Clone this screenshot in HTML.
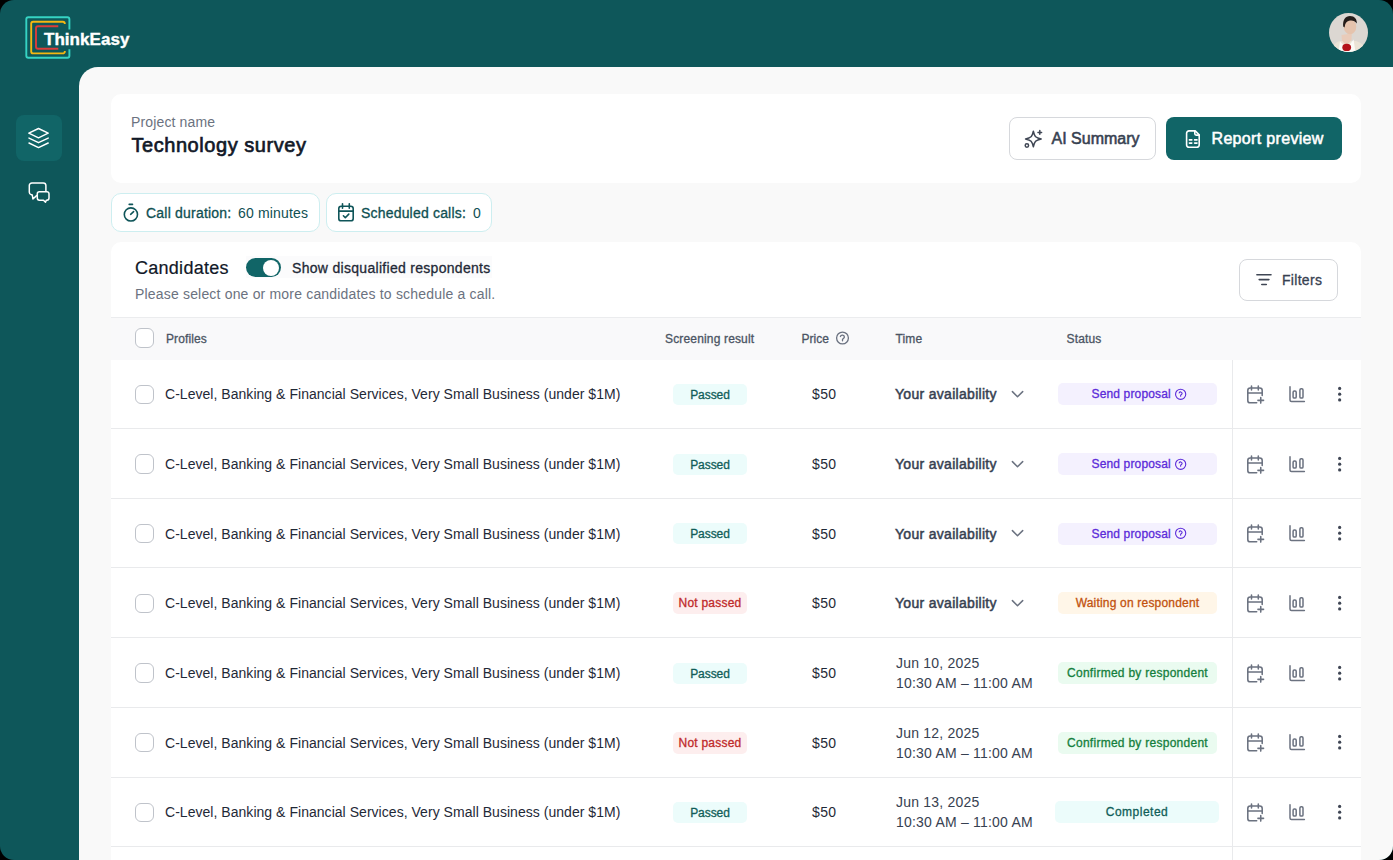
<!DOCTYPE html>
<html><head><meta charset="utf-8">
<style>
*{box-sizing:border-box;margin:0;padding:0}
html,body{width:1393px;height:860px;background:#000;overflow:hidden}
body{font-family:"Liberation Sans",sans-serif;color:#111827}
.app{position:absolute;left:0;top:0;width:1393px;height:860px;border-radius:14px;overflow:hidden;background:#0e575a}
.abs{position:absolute}
.main{position:absolute;left:79px;top:66.5px;width:1314px;height:794px;background:#f9f9f9;border-top-left-radius:19px}
.card{position:absolute;background:#fff;border-radius:10px}
.t{position:absolute;white-space:nowrap;line-height:16px}
.row{position:absolute;left:111px;width:1250px;border-bottom:1px solid #e9eaec;background:#fff}
.cb{position:absolute;left:134.5px;width:19.5px;height:19.5px;border:1.5px solid #bfc3ca;border-radius:6px;background:#fff}
.prof{left:165px;font-size:14px;color:#1f2937;letter-spacing:0.036px}
.badge{position:absolute;height:22px;line-height:23px;border-radius:5px;font-size:12px;text-align:center;white-space:nowrap;-webkit-text-stroke:0.3px currentColor}
.pass{background:#ecfcfb;color:#115e59;height:21px;line-height:22px;letter-spacing:-0.05px}
.fail{background:#fdeeee;color:#c02a2a;letter-spacing:0.23px}
.send{background:#f4f1fe;color:#5b2bd9;letter-spacing:0.15px}
.wait{background:#fff6e8;color:#c2520f;letter-spacing:0.19px}
.conf{background:#eafbf0;color:#15803d;letter-spacing:0.27px}
.done{background:#ecfcfb;color:#115e59;letter-spacing:0.5px}
.price{left:812px;font-size:14px;color:#1f2937;letter-spacing:0.4px}
.avail{left:895px;font-size:14px;color:#374151;letter-spacing:0.3px;-webkit-text-stroke:0.5px currentColor}
.date{left:896px;font-size:14px;color:#374151;line-height:20px;letter-spacing:0.21px}
.hdr{font-size:12px;color:#4b5563}
.m{-webkit-text-stroke:0.3px currentColor}
.sb{-webkit-text-stroke:0.55px currentColor}
</style></head>
<body><div class="app">
<!-- logo -->
<svg class="abs" style="left:0;top:0" width="140" height="66" viewBox="0 0 140 66">
 <path d="M69.4 29.4 V19.2 a2 2 0 0 0 -2 -2 H28.3 a2 2 0 0 0 -2 2 V55.7 a2 2 0 0 0 2 2 H67.4 a2 2 0 0 0 2 -2 V49.2" fill="none" stroke="#36d3c3" stroke-width="1.9"/>
 <path d="M64.8 24 V23.8 a2 2 0 0 0 -2 -2 H33.2 a2 2 0 0 0 -2 2 V51.4 a2 2 0 0 0 2 2 H62.8 a2 2 0 0 0 2 -2 V51" fill="none" stroke="#f4b711" stroke-width="1.9"/>
 <path d="M58.3 26.3 H38 a2 2 0 0 0 -2 2 V46.8 a2 2 0 0 0 2 2 H58.3" fill="none" stroke="#dc3d3a" stroke-width="1.9"/>
</svg>
<div class="t" style="left:44px;top:30.5px;font-size:17px;line-height:17px;font-weight:bold;color:#fff;letter-spacing:0.04px;-webkit-text-stroke:0.4px #fff">ThinkEasy</div>

<!-- avatar -->
<svg class="abs" style="left:1329px;top:13px" width="39" height="39" viewBox="0 0 39 39">
 <defs><clipPath id="av"><circle cx="19.5" cy="19.5" r="19.5"/></clipPath></defs>
 <g clip-path="url(#av)">
  <rect width="39" height="39" fill="#dcd7d2"/>
  <path d="M0 39 C3 32 7 29.5 11 28 L27 28 C32 29.5 36 33 39 39Z" fill="#ebe3d6"/>
  <path d="M12.5 22 L13 27.5 L17.5 33 L22.5 27 L22.8 20.5Z" fill="#e9cbb9"/>
  <path d="M9.5 39 L11 28.5 L16 33.5 L18 36 L22 30 L24.5 26.5 L26.5 39Z" fill="#fbfaf7"/>
  <ellipse cx="17.7" cy="34.4" rx="4.4" ry="3.6" fill="#b4121a"/>
  <ellipse cx="21" cy="13.8" rx="6.3" ry="7.4" fill="#e5c3ad"/>
  <path d="M14.2 13.5 C13.5 7 16.5 3 21 3 C25.5 3 28.3 6.5 27.8 10.5 C26 7.8 23 7 20 7.8 C17.5 8.5 16 10.5 15.6 14.5Z" fill="#251d1a"/>
 </g>
</svg>

<!-- sidebar -->
<div class="abs" style="left:15.5px;top:114.5px;width:46.5px;height:46.5px;border-radius:8px;background:#116567"></div>
<svg class="abs" style="left:24px;top:124px" width="30" height="30" viewBox="0 0 30 30" fill="none" stroke="#fff" stroke-width="1.45" stroke-linejoin="round" stroke-linecap="round">
 <path d="M14.5 4.5 L24.2 9.2 L14.5 13.8 L4.8 9.2Z"/>
 <path d="M5 14.1 L14.5 18.7 L24.2 14.1"/>
 <path d="M5 19 L14.5 23.6 L24.2 19"/>
</svg>
<svg class="abs" style="left:24px;top:178px" width="30" height="30" viewBox="0 0 30 30" fill="none" stroke="#fff" stroke-width="1.5" stroke-linejoin="round" stroke-linecap="round">
 <path d="M21.9 13.2 V7.6 a2.6 2.6 0 0 0 -2.6 -2.6 H7.9 a2.6 2.6 0 0 0 -2.6 2.6 V14.2 a2.6 2.6 0 0 0 2 2.5 L8.3 17 L8.9 21 L12.6 17.6"/>
 <path d="M15.4 13.7 H22.9 a2.1 2.1 0 0 1 2.1 2.1 V20.1 a2.1 2.1 0 0 1 -2.1 2.1 H22.3 L21.5 24.2 L19.5 22.2 H15.4 a2.1 2.1 0 0 1 -2.1 -2.1 V15.8 a2.1 2.1 0 0 1 2.1 -2.1Z"/>
</svg>

<!-- main -->
<div class="main"></div>

<!-- project card -->
<div class="card" style="left:111px;top:94px;width:1250px;height:89px"></div>
<div class="t" style="left:131px;top:114px;font-size:14px;color:#6b7280;letter-spacing:0.14px">Project name</div>
<div class="t sb" style="left:131.5px;top:135px;font-size:20px;line-height:20px;color:#111827;letter-spacing:0.55px;-webkit-text-stroke:0.65px #111827">Technology survey</div>

<div class="abs" style="left:1009px;top:117px;width:147px;height:43px;border:1px solid #d6d8dc;border-radius:8px;background:#fff"></div>
<svg class="abs" style="left:1018px;top:124px" width="30" height="30" viewBox="0 0 30 30" fill="none" stroke="#3f4654" stroke-width="1.5" stroke-linejoin="round" stroke-linecap="round">
 <path transform="translate(15.35 15) scale(1.155) translate(-9 -12)" stroke-width="1.3" d="M9.813 15.904 L9 18.75 l-.813-2.846 a4.5 4.5 0 0 0-3.09-3.09 L2.25 12 l2.846-.813 a4.5 4.5 0 0 0 3.09-3.09 L9 5.25 l.813 2.846 a4.5 4.5 0 0 0 3.09 3.09 L15.75 12 l-2.846.813 a4.5 4.5 0 0 0-3.09 3.09Z"/>
 <path d="M21.8 6.6v3.6M20 8.4h3.6"/>
 <circle cx="8.9" cy="21.45" r="1.7"/>
</svg>
<div class="t sb" style="left:1051.5px;top:131px;font-size:16px;line-height:16px;color:#374151;letter-spacing:0px">AI Summary</div>

<div class="abs" style="left:1166px;top:117px;width:176px;height:43px;border-radius:8px;background:#116567"></div>
<svg class="abs" style="left:1178px;top:124px" width="30" height="30" viewBox="0 0 30 30" fill="none" stroke="#fff" stroke-width="1.6" stroke-linejoin="round" stroke-linecap="round">
 <path d="M17.2 6.9 H11 a2.4 2.4 0 0 0 -2.4 2.4 V20.9 a2.4 2.4 0 0 0 2.4 2.4 H18.8 a2.4 2.4 0 0 0 2.4 -2.4 V10.9Z"/>
 <path d="M16.8 7.2 V9.8 a1.3 1.3 0 0 0 1.3 1.3 H21"/>
 <path d="M11.4 15.9h2.4M16.6 15.9h2.4M11.4 19.1h2.4M16.6 19.1h2.4"/>
</svg>
<div class="t sb" style="left:1211.5px;top:131px;font-size:16px;line-height:16px;color:#fff;letter-spacing:0.33px">Report preview</div>

<!-- chips -->
<div class="abs" style="left:111px;top:193px;width:208.5px;height:38.5px;border:1px solid #cdeef0;border-radius:10px;background:#fff"></div>
<svg class="abs" style="left:116px;top:197px" width="30" height="30" viewBox="0 0 30 30" fill="none" stroke="#0f5559" stroke-width="1.6" stroke-linecap="round" stroke-linejoin="round">
 <circle cx="14.9" cy="17.45" r="6.6"/>
 <path d="M13.2 7.4h3.3M14.65 17.3l2.95-2.65"/>
</svg>
<div class="t m" style="left:146px;top:205px;font-size:14px;color:#0f4f52;letter-spacing:0.21px">Call duration:</div>
<div class="t" style="left:238px;top:205px;font-size:14px;color:#0f4f52;letter-spacing:0.16px">60 minutes</div>

<div class="abs" style="left:326px;top:193px;width:165.5px;height:38.5px;border:1px solid #cdeef0;border-radius:10px;background:#fff"></div>
<svg class="abs" style="left:331px;top:197px" width="30" height="30" viewBox="0 0 30 30" fill="none" stroke="#0f5559" stroke-width="1.6" stroke-linecap="round" stroke-linejoin="round">
 <rect x="7.8" y="9.2" width="14.4" height="14.6" rx="2.4"/>
 <path d="M7.8 14.1H22.2M11.5 6.7v4.6M18.3 6.7v4.6M12.4 18.8l1.9 1.95l3.5-3.65"/>
</svg>
<div class="t m" style="left:361px;top:205px;font-size:14px;color:#0f4f52;letter-spacing:0.19px">Scheduled calls:</div>
<div class="t" style="left:473px;top:205px;font-size:14px;color:#0f4f52">0</div>

<!-- table card -->
<div class="card" style="left:111px;top:241.5px;width:1250px;height:640px"></div>
<div class="t" style="left:135px;top:258.5px;font-size:18px;line-height:18px;color:#111827;letter-spacing:0.27px;-webkit-text-stroke:0.2px #111827">Candidates</div>
<div class="abs" style="left:246px;top:256px;width:246px;height:22px;background:#fbfbfc"></div>
<div class="abs" style="left:246px;top:258px;width:35px;height:19px;border-radius:10px;background:#116567"></div>
<div class="abs" style="left:263px;top:259.6px;width:16px;height:16px;border-radius:50%;background:#fff"></div>
<div class="t m" style="left:292px;top:260px;font-size:14px;color:#1f2937;letter-spacing:0.3px">Show disqualified respondents</div>
<div class="t" style="left:135px;top:286px;font-size:14px;color:#6b7280;letter-spacing:0.18px">Please select one or more candidates to schedule a call.</div>

<div class="abs" style="left:1239px;top:258.5px;width:98.5px;height:42px;border:1px solid #d6d8dc;border-radius:8px;background:#fff"></div>
<svg class="abs" style="left:1250px;top:265px" width="30" height="30" viewBox="0 0 30 30" fill="none" stroke="#3f4654" stroke-width="1.6" stroke-linecap="round">
 <path d="M6.9 9.8H21M9.2 14.6h9.7M11.8 19.5h4.5"/>
</svg>
<div class="t m" style="left:1282px;top:272px;font-size:14px;color:#374151;letter-spacing:0.3px">Filters</div>

<!-- table header -->
<div class="abs" style="left:111px;top:317px;width:1250px;height:42.5px;background:#f9f9fa;border-top:1px solid #ebecee"></div>
<div class="cb" style="top:328.3px"></div>
<div class="t hdr m" style="left:166px;top:331px;letter-spacing:0.11px">Profiles</div>
<div class="t hdr m" style="left:665px;top:331px;letter-spacing:0.16px">Screening result</div>
<div class="t hdr m" style="left:801.5px;top:331px">Price</div>
<svg class="abs" style="left:827px;top:323px" width="30" height="30" viewBox="0 0 30 30" fill="none" stroke="#6b7280" stroke-width="1.3" stroke-linecap="round" stroke-linejoin="round">
 <circle cx="15.5" cy="15" r="5.9"/>
 <path d="M13.4 13.5a2.05 2.05 0 0 1 4 .6c0 1.2-1.9 1.5-1.9 2.5v1.2"/>
</svg>
<div class="t hdr m" style="left:895.5px;top:331px;letter-spacing:0.15px">Time</div>
<div class="t hdr m" style="left:1066.5px;top:331px;letter-spacing:0.15px">Status</div>

<div class="row" style="top:359.50px;height:69.67px"></div>
<div class="cb" style="top:384.63px"></div>
<div class="t prof" style="top:386.33px">C-Level, Banking &amp; Financial Services, Very Small Business (under $1M)</div>
<div class="badge pass" style="left:673px;width:74px;top:383.83px">Passed</div>
<div class="t price" style="top:386.33px">$50</div>
<div class="t avail" style="top:386.33px">Your availability</div>
<svg class="abs" style="left:1003px;top:379.03px" width="30" height="30" viewBox="0 0 30 30" fill="none" stroke="#6b7280" stroke-width="1.5" stroke-linecap="round" stroke-linejoin="round"><path d="M9.4 12.6L14.5 17.7L19.7 12.6"/></svg>
<div class="badge send" style="left:1058px;width:159px;top:383.33px;text-align:left;padding-left:33.5px">Send proposal</div>
<svg class="abs" style="left:1166px;top:379.03px" width="30" height="30" viewBox="0 0 30 30" fill="none" stroke="#5b2bd9" stroke-width="1.1" stroke-linecap="round" stroke-linejoin="round"><circle cx="14.65" cy="15.3" r="5.1"/><path d="M13.2 13.9a1.5 1.5 0 0 1 2.9 .5c0 1-1.45 1.1-1.45 2v0.9"/></svg>
<svg class="abs" style="left:1240px;top:379.03px" width="30" height="30" viewBox="0 0 30 30" fill="none" stroke="#6b7280" stroke-width="1.55" stroke-linecap="round" stroke-linejoin="round"><path d="M22.2 16.4V11.4a2.4 2.4 0 0 0-2.4-2.4H10.2a2.4 2.4 0 0 0-2.4 2.4V21.4a2.4 2.4 0 0 0 2.4 2.4H16.7"/><path d="M7.8 14H22.2"/><path d="M11.5 6.9v4.1M18.3 6.9v4.1"/><path d="M20.75 18.5v5.6M17.9 21.35h5.7"/></svg>
<svg class="abs" style="left:1282px;top:379.03px" width="30" height="30" viewBox="0 0 30 30" fill="none" stroke="#6b7280" stroke-width="1.5" stroke-linecap="round" stroke-linejoin="round"><path d="M8 7.7V20.9a1.5 1.5 0 0 0 1.5 1.5H22.4"/><rect x="11.1" y="12.1" width="3.1" height="7" rx="1.2"/><rect x="17.9" y="9.7" width="3.1" height="9.4" rx="1.2"/></svg>
<svg class="abs" style="left:1325px;top:379.03px" width="30" height="30" viewBox="0 0 30 30" fill="#3f4654"><circle cx="14.65" cy="9.4" r="1.6"/><circle cx="14.65" cy="15.2" r="1.6"/><circle cx="14.65" cy="20.9" r="1.6"/></svg>
<div class="row" style="top:429.17px;height:69.67px"></div>
<div class="cb" style="top:454.31px"></div>
<div class="t prof" style="top:456.00px">C-Level, Banking &amp; Financial Services, Very Small Business (under $1M)</div>
<div class="badge pass" style="left:673px;width:74px;top:453.50px">Passed</div>
<div class="t price" style="top:456.00px">$50</div>
<div class="t avail" style="top:456.00px">Your availability</div>
<svg class="abs" style="left:1003px;top:448.70px" width="30" height="30" viewBox="0 0 30 30" fill="none" stroke="#6b7280" stroke-width="1.5" stroke-linecap="round" stroke-linejoin="round"><path d="M9.4 12.6L14.5 17.7L19.7 12.6"/></svg>
<div class="badge send" style="left:1058px;width:159px;top:453.00px;text-align:left;padding-left:33.5px">Send proposal</div>
<svg class="abs" style="left:1166px;top:448.70px" width="30" height="30" viewBox="0 0 30 30" fill="none" stroke="#5b2bd9" stroke-width="1.1" stroke-linecap="round" stroke-linejoin="round"><circle cx="14.65" cy="15.3" r="5.1"/><path d="M13.2 13.9a1.5 1.5 0 0 1 2.9 .5c0 1-1.45 1.1-1.45 2v0.9"/></svg>
<svg class="abs" style="left:1240px;top:448.70px" width="30" height="30" viewBox="0 0 30 30" fill="none" stroke="#6b7280" stroke-width="1.55" stroke-linecap="round" stroke-linejoin="round"><path d="M22.2 16.4V11.4a2.4 2.4 0 0 0-2.4-2.4H10.2a2.4 2.4 0 0 0-2.4 2.4V21.4a2.4 2.4 0 0 0 2.4 2.4H16.7"/><path d="M7.8 14H22.2"/><path d="M11.5 6.9v4.1M18.3 6.9v4.1"/><path d="M20.75 18.5v5.6M17.9 21.35h5.7"/></svg>
<svg class="abs" style="left:1282px;top:448.70px" width="30" height="30" viewBox="0 0 30 30" fill="none" stroke="#6b7280" stroke-width="1.5" stroke-linecap="round" stroke-linejoin="round"><path d="M8 7.7V20.9a1.5 1.5 0 0 0 1.5 1.5H22.4"/><rect x="11.1" y="12.1" width="3.1" height="7" rx="1.2"/><rect x="17.9" y="9.7" width="3.1" height="9.4" rx="1.2"/></svg>
<svg class="abs" style="left:1325px;top:448.70px" width="30" height="30" viewBox="0 0 30 30" fill="#3f4654"><circle cx="14.65" cy="9.4" r="1.6"/><circle cx="14.65" cy="15.2" r="1.6"/><circle cx="14.65" cy="20.9" r="1.6"/></svg>
<div class="row" style="top:498.84px;height:69.67px"></div>
<div class="cb" style="top:523.98px"></div>
<div class="t prof" style="top:525.68px">C-Level, Banking &amp; Financial Services, Very Small Business (under $1M)</div>
<div class="badge pass" style="left:673px;width:74px;top:523.18px">Passed</div>
<div class="t price" style="top:525.68px">$50</div>
<div class="t avail" style="top:525.68px">Your availability</div>
<svg class="abs" style="left:1003px;top:518.38px" width="30" height="30" viewBox="0 0 30 30" fill="none" stroke="#6b7280" stroke-width="1.5" stroke-linecap="round" stroke-linejoin="round"><path d="M9.4 12.6L14.5 17.7L19.7 12.6"/></svg>
<div class="badge send" style="left:1058px;width:159px;top:522.68px;text-align:left;padding-left:33.5px">Send proposal</div>
<svg class="abs" style="left:1166px;top:518.38px" width="30" height="30" viewBox="0 0 30 30" fill="none" stroke="#5b2bd9" stroke-width="1.1" stroke-linecap="round" stroke-linejoin="round"><circle cx="14.65" cy="15.3" r="5.1"/><path d="M13.2 13.9a1.5 1.5 0 0 1 2.9 .5c0 1-1.45 1.1-1.45 2v0.9"/></svg>
<svg class="abs" style="left:1240px;top:518.38px" width="30" height="30" viewBox="0 0 30 30" fill="none" stroke="#6b7280" stroke-width="1.55" stroke-linecap="round" stroke-linejoin="round"><path d="M22.2 16.4V11.4a2.4 2.4 0 0 0-2.4-2.4H10.2a2.4 2.4 0 0 0-2.4 2.4V21.4a2.4 2.4 0 0 0 2.4 2.4H16.7"/><path d="M7.8 14H22.2"/><path d="M11.5 6.9v4.1M18.3 6.9v4.1"/><path d="M20.75 18.5v5.6M17.9 21.35h5.7"/></svg>
<svg class="abs" style="left:1282px;top:518.38px" width="30" height="30" viewBox="0 0 30 30" fill="none" stroke="#6b7280" stroke-width="1.5" stroke-linecap="round" stroke-linejoin="round"><path d="M8 7.7V20.9a1.5 1.5 0 0 0 1.5 1.5H22.4"/><rect x="11.1" y="12.1" width="3.1" height="7" rx="1.2"/><rect x="17.9" y="9.7" width="3.1" height="9.4" rx="1.2"/></svg>
<svg class="abs" style="left:1325px;top:518.38px" width="30" height="30" viewBox="0 0 30 30" fill="#3f4654"><circle cx="14.65" cy="9.4" r="1.6"/><circle cx="14.65" cy="15.2" r="1.6"/><circle cx="14.65" cy="20.9" r="1.6"/></svg>
<div class="row" style="top:568.51px;height:69.67px"></div>
<div class="cb" style="top:593.64px"></div>
<div class="t prof" style="top:595.35px">C-Level, Banking &amp; Financial Services, Very Small Business (under $1M)</div>
<div class="badge fail" style="left:673px;width:74px;top:592.35px">Not passed</div>
<div class="t price" style="top:595.35px">$50</div>
<div class="t avail" style="top:595.35px">Your availability</div>
<svg class="abs" style="left:1003px;top:588.05px" width="30" height="30" viewBox="0 0 30 30" fill="none" stroke="#6b7280" stroke-width="1.5" stroke-linecap="round" stroke-linejoin="round"><path d="M9.4 12.6L14.5 17.7L19.7 12.6"/></svg>
<div class="badge wait" style="left:1058px;width:159px;top:592.35px">Waiting on respondent</div>
<svg class="abs" style="left:1240px;top:588.05px" width="30" height="30" viewBox="0 0 30 30" fill="none" stroke="#6b7280" stroke-width="1.55" stroke-linecap="round" stroke-linejoin="round"><path d="M22.2 16.4V11.4a2.4 2.4 0 0 0-2.4-2.4H10.2a2.4 2.4 0 0 0-2.4 2.4V21.4a2.4 2.4 0 0 0 2.4 2.4H16.7"/><path d="M7.8 14H22.2"/><path d="M11.5 6.9v4.1M18.3 6.9v4.1"/><path d="M20.75 18.5v5.6M17.9 21.35h5.7"/></svg>
<svg class="abs" style="left:1282px;top:588.05px" width="30" height="30" viewBox="0 0 30 30" fill="none" stroke="#6b7280" stroke-width="1.5" stroke-linecap="round" stroke-linejoin="round"><path d="M8 7.7V20.9a1.5 1.5 0 0 0 1.5 1.5H22.4"/><rect x="11.1" y="12.1" width="3.1" height="7" rx="1.2"/><rect x="17.9" y="9.7" width="3.1" height="9.4" rx="1.2"/></svg>
<svg class="abs" style="left:1325px;top:588.05px" width="30" height="30" viewBox="0 0 30 30" fill="#3f4654"><circle cx="14.65" cy="9.4" r="1.6"/><circle cx="14.65" cy="15.2" r="1.6"/><circle cx="14.65" cy="20.9" r="1.6"/></svg>
<div class="row" style="top:638.18px;height:69.67px"></div>
<div class="cb" style="top:663.32px"></div>
<div class="t prof" style="top:665.02px">C-Level, Banking &amp; Financial Services, Very Small Business (under $1M)</div>
<div class="badge pass" style="left:673px;width:74px;top:662.52px">Passed</div>
<div class="t price" style="top:665.02px">$50</div>
<div class="t date" style="top:653.02px">Jun 10, 2025<br>10:30 AM – 11:00 AM</div>
<div class="badge conf" style="left:1058px;width:159px;top:662.02px">Confirmed by respondent</div>
<svg class="abs" style="left:1240px;top:657.72px" width="30" height="30" viewBox="0 0 30 30" fill="none" stroke="#6b7280" stroke-width="1.55" stroke-linecap="round" stroke-linejoin="round"><path d="M22.2 16.4V11.4a2.4 2.4 0 0 0-2.4-2.4H10.2a2.4 2.4 0 0 0-2.4 2.4V21.4a2.4 2.4 0 0 0 2.4 2.4H16.7"/><path d="M7.8 14H22.2"/><path d="M11.5 6.9v4.1M18.3 6.9v4.1"/><path d="M20.75 18.5v5.6M17.9 21.35h5.7"/></svg>
<svg class="abs" style="left:1282px;top:657.72px" width="30" height="30" viewBox="0 0 30 30" fill="none" stroke="#6b7280" stroke-width="1.5" stroke-linecap="round" stroke-linejoin="round"><path d="M8 7.7V20.9a1.5 1.5 0 0 0 1.5 1.5H22.4"/><rect x="11.1" y="12.1" width="3.1" height="7" rx="1.2"/><rect x="17.9" y="9.7" width="3.1" height="9.4" rx="1.2"/></svg>
<svg class="abs" style="left:1325px;top:657.72px" width="30" height="30" viewBox="0 0 30 30" fill="#3f4654"><circle cx="14.65" cy="9.4" r="1.6"/><circle cx="14.65" cy="15.2" r="1.6"/><circle cx="14.65" cy="20.9" r="1.6"/></svg>
<div class="row" style="top:707.85px;height:69.67px"></div>
<div class="cb" style="top:732.99px"></div>
<div class="t prof" style="top:734.69px">C-Level, Banking &amp; Financial Services, Very Small Business (under $1M)</div>
<div class="badge fail" style="left:673px;width:74px;top:731.69px">Not passed</div>
<div class="t price" style="top:734.69px">$50</div>
<div class="t date" style="top:722.69px">Jun 12, 2025<br>10:30 AM – 11:00 AM</div>
<div class="badge conf" style="left:1058px;width:159px;top:731.69px">Confirmed by respondent</div>
<svg class="abs" style="left:1240px;top:727.39px" width="30" height="30" viewBox="0 0 30 30" fill="none" stroke="#6b7280" stroke-width="1.55" stroke-linecap="round" stroke-linejoin="round"><path d="M22.2 16.4V11.4a2.4 2.4 0 0 0-2.4-2.4H10.2a2.4 2.4 0 0 0-2.4 2.4V21.4a2.4 2.4 0 0 0 2.4 2.4H16.7"/><path d="M7.8 14H22.2"/><path d="M11.5 6.9v4.1M18.3 6.9v4.1"/><path d="M20.75 18.5v5.6M17.9 21.35h5.7"/></svg>
<svg class="abs" style="left:1282px;top:727.39px" width="30" height="30" viewBox="0 0 30 30" fill="none" stroke="#6b7280" stroke-width="1.5" stroke-linecap="round" stroke-linejoin="round"><path d="M8 7.7V20.9a1.5 1.5 0 0 0 1.5 1.5H22.4"/><rect x="11.1" y="12.1" width="3.1" height="7" rx="1.2"/><rect x="17.9" y="9.7" width="3.1" height="9.4" rx="1.2"/></svg>
<svg class="abs" style="left:1325px;top:727.39px" width="30" height="30" viewBox="0 0 30 30" fill="#3f4654"><circle cx="14.65" cy="9.4" r="1.6"/><circle cx="14.65" cy="15.2" r="1.6"/><circle cx="14.65" cy="20.9" r="1.6"/></svg>
<div class="row" style="top:777.52px;height:69.67px"></div>
<div class="cb" style="top:802.65px"></div>
<div class="t prof" style="top:804.36px">C-Level, Banking &amp; Financial Services, Very Small Business (under $1M)</div>
<div class="badge pass" style="left:673px;width:74px;top:801.86px">Passed</div>
<div class="t price" style="top:804.36px">$50</div>
<div class="t date" style="top:792.36px">Jun 13, 2025<br>10:30 AM – 11:00 AM</div>
<div class="badge done" style="left:1055px;width:164px;top:801.36px">Completed</div>
<svg class="abs" style="left:1240px;top:797.06px" width="30" height="30" viewBox="0 0 30 30" fill="none" stroke="#6b7280" stroke-width="1.55" stroke-linecap="round" stroke-linejoin="round"><path d="M22.2 16.4V11.4a2.4 2.4 0 0 0-2.4-2.4H10.2a2.4 2.4 0 0 0-2.4 2.4V21.4a2.4 2.4 0 0 0 2.4 2.4H16.7"/><path d="M7.8 14H22.2"/><path d="M11.5 6.9v4.1M18.3 6.9v4.1"/><path d="M20.75 18.5v5.6M17.9 21.35h5.7"/></svg>
<svg class="abs" style="left:1282px;top:797.06px" width="30" height="30" viewBox="0 0 30 30" fill="none" stroke="#6b7280" stroke-width="1.5" stroke-linecap="round" stroke-linejoin="round"><path d="M8 7.7V20.9a1.5 1.5 0 0 0 1.5 1.5H22.4"/><rect x="11.1" y="12.1" width="3.1" height="7" rx="1.2"/><rect x="17.9" y="9.7" width="3.1" height="9.4" rx="1.2"/></svg>
<svg class="abs" style="left:1325px;top:797.06px" width="30" height="30" viewBox="0 0 30 30" fill="#3f4654"><circle cx="14.65" cy="9.4" r="1.6"/><circle cx="14.65" cy="15.2" r="1.6"/><circle cx="14.65" cy="20.9" r="1.6"/></svg>
<div class="row" style="top:847.19px;height:69.67px"></div>
<div class="cb" style="top:872.33px"></div>
<div class="t prof" style="top:874.03px">C-Level, Banking &amp; Financial Services, Very Small Business (under $1M)</div>
<div class="badge pass" style="left:673px;width:74px;top:871.53px">Passed</div>
<div class="t price" style="top:874.03px">$50</div>
<div class="t avail" style="top:874.03px">Your availability</div>
<svg class="abs" style="left:1003px;top:866.73px" width="30" height="30" viewBox="0 0 30 30" fill="none" stroke="#6b7280" stroke-width="1.5" stroke-linecap="round" stroke-linejoin="round"><path d="M9.4 12.6L14.5 17.7L19.7 12.6"/></svg>
<div class="badge send" style="left:1058px;width:159px;top:871.03px;text-align:left;padding-left:33.5px">Send proposal</div>
<svg class="abs" style="left:1166px;top:866.73px" width="30" height="30" viewBox="0 0 30 30" fill="none" stroke="#5b2bd9" stroke-width="1.1" stroke-linecap="round" stroke-linejoin="round"><circle cx="14.65" cy="15.3" r="5.1"/><path d="M13.2 13.9a1.5 1.5 0 0 1 2.9 .5c0 1-1.45 1.1-1.45 2v0.9"/></svg>
<svg class="abs" style="left:1240px;top:866.73px" width="30" height="30" viewBox="0 0 30 30" fill="none" stroke="#6b7280" stroke-width="1.55" stroke-linecap="round" stroke-linejoin="round"><path d="M22.2 16.4V11.4a2.4 2.4 0 0 0-2.4-2.4H10.2a2.4 2.4 0 0 0-2.4 2.4V21.4a2.4 2.4 0 0 0 2.4 2.4H16.7"/><path d="M7.8 14H22.2"/><path d="M11.5 6.9v4.1M18.3 6.9v4.1"/><path d="M20.75 18.5v5.6M17.9 21.35h5.7"/></svg>
<svg class="abs" style="left:1282px;top:866.73px" width="30" height="30" viewBox="0 0 30 30" fill="none" stroke="#6b7280" stroke-width="1.5" stroke-linecap="round" stroke-linejoin="round"><path d="M8 7.7V20.9a1.5 1.5 0 0 0 1.5 1.5H22.4"/><rect x="11.1" y="12.1" width="3.1" height="7" rx="1.2"/><rect x="17.9" y="9.7" width="3.1" height="9.4" rx="1.2"/></svg>
<svg class="abs" style="left:1325px;top:866.73px" width="30" height="30" viewBox="0 0 30 30" fill="#3f4654"><circle cx="14.65" cy="9.4" r="1.6"/><circle cx="14.65" cy="15.2" r="1.6"/><circle cx="14.65" cy="20.9" r="1.6"/></svg>
<div class="abs" style="left:1232px;top:359.5px;width:1px;height:520px;background:#e9eaec"></div>
</div>
</body></html>
